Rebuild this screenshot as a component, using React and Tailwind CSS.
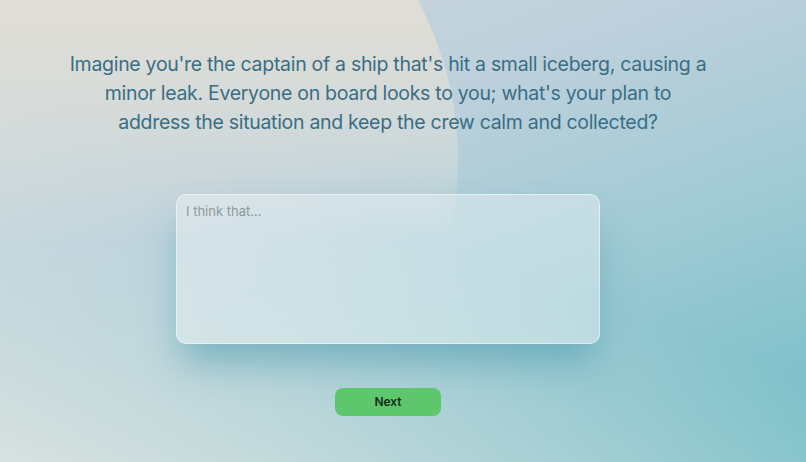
export default function App() {
  return (
    <div
      className="relative w-full h-[462px] overflow-hidden"
      style={{ fontFamily: 'Inter, "Noto Sans", sans-serif' }}
    >
      <div className="absolute inset-0 bg-[linear-gradient(160deg,#cfd8dc_0%,#bcd0dc_35%,#a2cbd5_60%,#72bdc6_100%)]" />
      <div className="absolute inset-0 bg-[linear-gradient(20deg,rgba(218,226,224,0.95)_0%,rgba(210,224,224,0.5)_25%,rgba(200,220,222,0)_50%)]" />
      <div className="absolute left-[-218px] top-[-178px] w-[676px] h-[676px] rounded-full bg-[linear-gradient(180deg,rgba(222,221,214,1)_30%,rgba(218,222,218,0.6)_48%,rgba(215,224,222,0)_62%)]" />
      <div className="relative flex flex-col items-center pr-[30px]">
        <h1 className="mt-[50px] text-[19.5px] leading-[29px] text-[#3a6e84] text-center tracking-[-0.3px]">
          <span className="block">Imagine you're the captain of a ship that's hit a small iceberg, causing a</span>
          <span className="block">minor leak. Everyone on board looks to you; what's your plan to</span>
          <span className="block">address the situation and keep the crew calm and collected?</span>
        </h1>
        <textarea
          placeholder="I think that..."
          className="mt-[57px] w-[424px] h-[150px] resize-none rounded-[10px] border border-white/50 bg-white/35 px-[9px] py-[7px] text-[13px] text-[#52686e] placeholder:text-[#8b9a9d] outline-none shadow-[0_24px_36px_-6px_rgba(60,145,165,0.5)]"
          style={{ fontFamily: 'Inter, "Noto Sans", sans-serif' }}
        />
        <button className="mt-[44px] w-[106px] h-[28px] rounded-[8px] bg-[#5ec76d] text-[12px] font-semibold text-[#112a16]">
          Next
        </button>
      </div>
    </div>
  );
}
